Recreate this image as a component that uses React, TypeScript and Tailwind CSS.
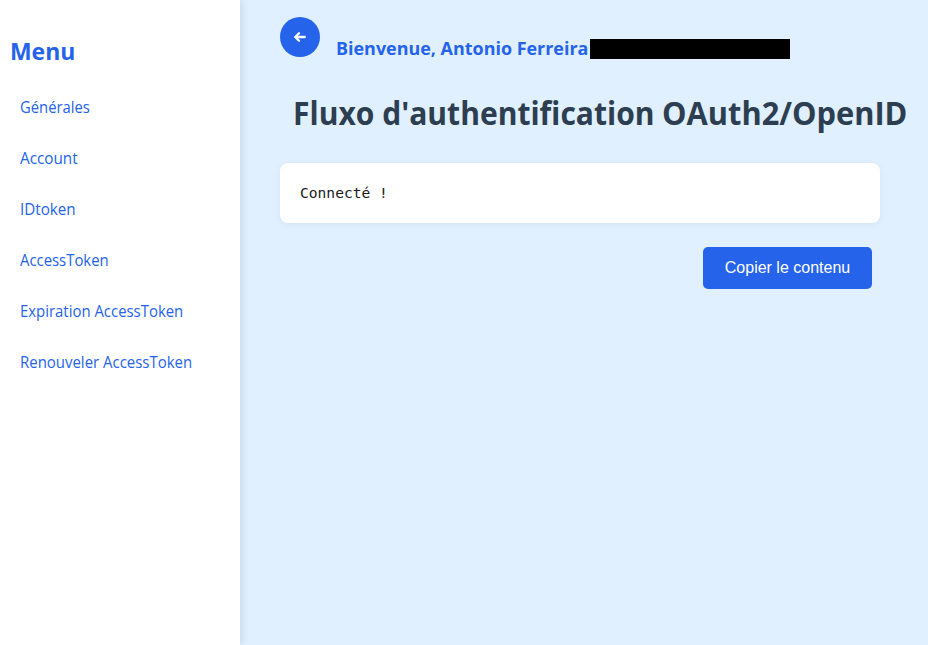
import React from "react";

const items = [
  { label: "Générales", scale: "scale-x-[0.925]" },
  { label: "Account", scale: "scale-x-[0.955]" },
  { label: "IDtoken", scale: "scale-x-[0.95]" },
  { label: "AccessToken", scale: "scale-x-[0.93]" },
  { label: "Expiration AccessToken", scale: "scale-x-[0.932]" },
  { label: "Renouveler AccessToken", scale: "scale-x-[0.935]" },
];

export default function App() {
  return (
    <div className="flex h-screen overflow-hidden bg-[#e0f0ff] font-['Segoe_UI','Open_Sans',sans-serif]">
      <aside className="relative w-60 shrink-0 bg-white shadow-[2px_0_8px_rgba(0,0,0,0.1)]">
        <h2 className="pt-[35px] pl-[10px] text-2xl leading-8 font-bold text-[#2563eb]">
          <span className="inline-block origin-left scale-x-[0.955] whitespace-nowrap">Menu</span>
        </h2>
        <nav className="mt-[19px] flex flex-col">
          {items.map((item) => (
            <a key={item.label} className="block h-[51px] pt-[11px] pl-5 text-base leading-[21px] whitespace-nowrap text-[#2563eb]">
              <span className={`inline-block origin-left ${item.scale}`}>{item.label}</span>
            </a>
          ))}
        </nav>
      </aside>
      <main className="min-w-0 flex-1 pl-10">
        <header className="flex pt-[17px]">
          <button className="flex size-10 items-center justify-center rounded-full bg-[#2563eb]" aria-label="Retour">
            <svg width="14" height="14" viewBox="0 0 14 14" fill="none" stroke="white" strokeWidth="2.3" strokeLinecap="round" strokeLinejoin="round">
              <path d="M11.8 7H2.4M6 3.2L2.2 7L6 10.8" />
            </svg>
          </button>
          <div className="mt-[19px] ml-4 flex h-6 text-lg leading-6 font-bold whitespace-nowrap text-[#2563eb]">
            <span className="w-[254px]">
              <span className="inline-block origin-left scale-x-[0.996]">Bienvenue, Antonio Ferreira</span>
            </span>
            <span className="mt-[3px] h-5 w-[200px] bg-black" />
          </div>
        </header>
        <h1 className="mt-[31px] pl-[13px] text-[32px] leading-[43px] font-bold whitespace-nowrap text-[#2c3e50]">
          <span className="inline-block origin-left scale-x-[0.939]">
            Fluxo d'authentification <span className="inline-block origin-left scale-x-[1.025]">OAuth2/OpenID</span>
          </span>
        </h1>
        <pre className="mt-[29px] h-[60px] w-[600px] rounded-lg bg-white p-5 font-['DejaVu_Sans_Mono',monospace] text-[14.6px] leading-5 text-[#1a1a1a] shadow-[0_2px_8px_rgba(0,0,0,0.05)]">Connecté !</pre>
        <button className="mt-6 ml-[423px] h-[42px] w-[169px] rounded-[5px] bg-[#2563eb] font-['Liberation_Sans',sans-serif] text-base text-white">Copier le contenu</button>
      </main>
    </div>
  );
}
